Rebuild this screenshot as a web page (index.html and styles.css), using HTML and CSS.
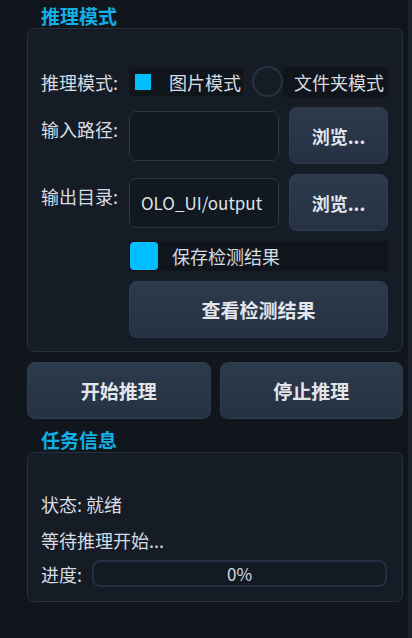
FILE: index.html
```html
<!DOCTYPE html>
<html lang="zh-CN">
<head>
<meta charset="utf-8">
<title>推理模式</title>
<link rel="stylesheet" href="styles.css">
</head>
<body>
<div class="page">
  <div class="panel">
    <div class="title t1">推理模式</div>
    <div class="group g1">
      <div class="form">
        <div class="label">推理模式:</div>
        <div class="radios">
          <div class="opt opt1"><span class="sq"></span><span>图片模式</span></div>
          <span class="circle"></span>
          <div class="opt opt2"><span>文件夹模式</span></div>
        </div>

        <div class="label up">输入路径:</div>
        <div class="pathrow">
          <div class="input"></div>
          <div class="btn small">浏览...</div>
        </div>

        <div class="label up">输出目录:</div>
        <div class="pathrow">
          <div class="input">OLO_UI/output</div>
          <div class="btn small">浏览...</div>
        </div>

        <div class="check">
          <span class="box"></span><span>保存检测结果</span>
        </div>

        <div class="btn wide">查看检测结果</div>
      </div>
    </div>

    <div class="actions">
      <div class="btn big">开始推理</div>
      <div class="btn big">停止推理</div>
    </div>

    <div class="title t2">任务信息</div>
    <div class="group g2">
      <div class="line">状态: 就绪</div>
      <div class="line l2">等待推理开始...</div>
      <div class="progress-row">
        <span class="plabel">进度:</span>
        <div class="bar">0%</div>
      </div>
    </div>
  </div>
  <div class="strip"></div>
</div>
</body>
</html>
```
FILE: styles.css
```css
* { box-sizing: border-box; }
html, body {
  margin: 0;
  padding: 0;
  background: #11161d;
}
body {
  font-family: "Noto Sans CJK SC", "Noto Sans", sans-serif;
  font-size: 18px;
  color: #d6dce3;
}
.page {
  width: 412px;
  height: 638px;
  display: flex;
  overflow: hidden;
}
.panel {
  width: 408px;
  padding-left: 27px;
  padding-right: 5px;
}
.strip {
  width: 4px;
  background: #1c232c;
}
.title {
  color: #12afe8;
  font-weight: bold;
  font-size: 19px;
  line-height: 20px;
  padding-left: 14px;
}
.t1 { padding-top: 6px; height: 28px; }
.t2 { padding-top: 11px; height: 33px; }

.group {
  background: #161c25;
  border: 1px solid #253041;
  border-radius: 7px;
}
.g1 {
  height: 324px;
  padding: 37px 14px 0 13px;
}
.form {
  display: grid;
  grid-template-columns: 88px 1fr;
  grid-template-rows: 31px 57px 57px 30px 57px;
  row-gap: 10px;
  align-items: center;
}
.form > :first-child { margin-bottom: -1px; }
.label {
  line-height: 24px;
  white-space: nowrap;
}
.label.up { padding-bottom: 14px; }

.radios {
  display: flex;
  align-items: center;
  height: 31px;
}
.opt {
  display: flex;
  align-items: center;
  background: #10151b;
  height: 28px;
  line-height: 24px;
}
.opt1 {
  width: 114px;
  padding-left: 6px;
}
.sq {
  width: 16px;
  height: 16px;
  background: #00bfff;
  margin-right: 18px;
}
.circle {
  width: 31px;
  height: 31px;
  border: 2px solid #27323f;
  border-radius: 50%;
  margin-left: 9px;
  flex: none;
}
.opt2 {
  flex: 1;
  height: 30px;
  padding-left: 11px;
}

.pathrow {
  display: flex;
  align-items: center;
  gap: 10px;
  height: 57px;
}
.input {
  width: 150px;
  height: 50px;
  background: #121820;
  border: 1px solid #2a3646;
  border-radius: 7px;
  padding-left: 11px;
  line-height: 48px;
  white-space: nowrap;
  overflow: hidden;
  color: #dfe4ea;
  font-size: 17px;
}
.btn {
  background: linear-gradient(#2d3a4c, #263244);
  border: 1px solid #303d4f;
  border-radius: 8px;
  display: flex;
  align-items: center;
  justify-content: center;
  font-weight: bold;
  font-size: 19px;
  color: #e2e6eb;
}
.btn.small {
  width: 99px;
  height: 57px;
  font-size: 18px;
}
.check {
  grid-column: 2;
  display: flex;
  align-items: center;
  background: #10151b;
  height: 30px;
  padding-left: 1px;
  line-height: 24px;
}
.box {
  width: 28px;
  height: 28px;
  background: #00bfff;
  border-radius: 4px;
  margin-right: 14px;
}
.btn.wide {
  grid-column: 2;
  height: 57px;
}

.actions {
  display: flex;
  gap: 9px;
  margin-top: 10px;
}
.btn.big {
  flex: 1;
  height: 57px;
}

.g2 {
  height: 150px;
  padding: 39px 14px 0 13px;
}
.line {
  line-height: 24px;
  height: 24px;
}
.l2 { margin-top: 12px; }
.progress-row {
  display: flex;
  align-items: center;
  margin-top: 8px;
  height: 27px;
}
.plabel {
  width: 51px;
  line-height: 24px;
}
.bar {
  flex: 1;
  height: 27px;
  margin-right: 1px;
  border: 2px solid #243041;
  border-radius: 8px;
  background: #141a23;
  text-align: center;
  line-height: 23px;
  font-size: 17px;
}
```
